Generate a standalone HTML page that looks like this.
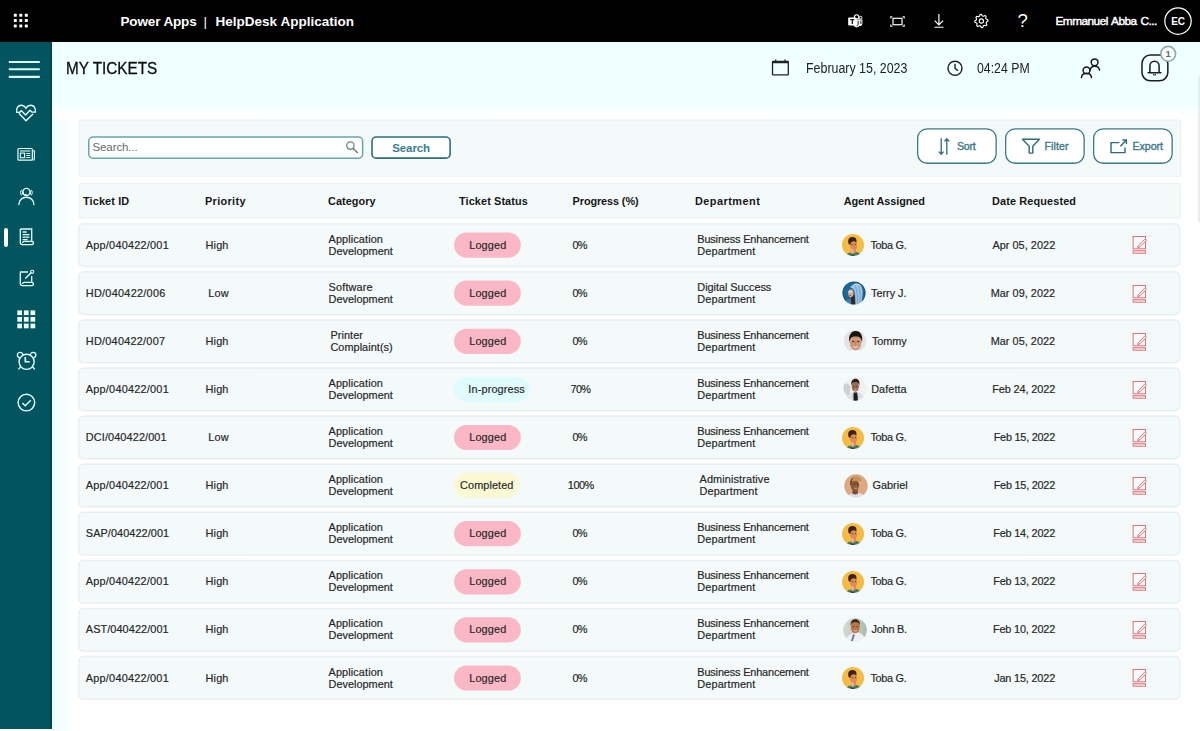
<!DOCTYPE html>
<html lang="en"><head><meta charset="utf-8"><title>HelpDesk Application - My Tickets</title>
<style>
*{box-sizing:border-box;margin:0;padding:0}
html,body{width:1200px;height:731px;overflow:hidden;background:#fff}
body{position:relative;font-family:"Liberation Sans",sans-serif;color:#222}
.t{position:absolute;white-space:nowrap}
.abs{position:absolute}
svg{position:absolute;overflow:visible}
.topbar{position:absolute;left:0;top:0;width:1200px;height:42px;background:#000}
.side{position:absolute;left:0;top:42px;width:52px;height:686.5px;background:#02545e}
.side:after{content:"";position:absolute;right:0;top:0;width:3px;height:100%;background:linear-gradient(90deg,rgba(0,30,40,0),rgba(0,30,40,.12) 45%,rgba(0,30,40,.45))}
.head{position:absolute;left:52px;top:42px;width:1148px;height:78px;background:linear-gradient(180deg,#f0ffff 0,#f0ffff 61px,#f8ffff 67px,#fff 73px)}
</style></head><body>

<div class="topbar"></div>
<svg style="left:0;top:0" width="42" height="42" viewBox="0 0 42 42"><rect x="13.8" y="13.8" width="3" height="3" rx=".6" fill="#fff"/><rect x="19.3" y="13.8" width="3" height="3" rx=".6" fill="#fff"/><rect x="24.8" y="13.8" width="3" height="3" rx=".6" fill="#fff"/><rect x="13.8" y="19.1" width="3" height="3" rx=".6" fill="#fff"/><rect x="19.3" y="19.1" width="3" height="3" rx=".6" fill="#fff"/><rect x="24.8" y="19.1" width="3" height="3" rx=".6" fill="#fff"/><rect x="13.8" y="24.4" width="3" height="3" rx=".6" fill="#fff"/><rect x="19.3" y="24.4" width="3" height="3" rx=".6" fill="#fff"/><rect x="24.8" y="24.4" width="3" height="3" rx=".6" fill="#fff"/></svg>
<div class="t" style="left:120.50px;top:12.62px;font-size:13.5px;line-height:18px;font-weight:700;color:#fff;letter-spacing:-0.146px;">Power Apps</div>
<div class="t" style="left:203.50px;top:12.62px;font-size:13.5px;line-height:18px;font-weight:400;color:#fff;letter-spacing:0.000px;">|</div>
<div class="t" style="left:215.50px;top:12.62px;font-size:13.5px;line-height:18px;font-weight:700;color:#fff;letter-spacing:0.012px;">HelpDesk Application</div>
<svg style="left:847.6px;top:13.6px" width="15" height="15" viewBox="0 0 15 15">
<circle cx="8.6" cy="2.9" r="2.2" fill="none" stroke="#fff" stroke-width="1.1"/>
<circle cx="12.7" cy="3.7" r="1.35" fill="none" stroke="#fff" stroke-width="1"/>
<path d="M6.2 5.4h5.6v5.0a3.3 3.3 0 0 1-6.2 1.2z" fill="#fff"/>
<path d="M11.2 5.6h3.2v4.2a2.2 2.2 0 0 1-3.2 1.9z" fill="#fff"/>
<path d="M10.1 6.6v3.6a1.8 1.8 0 0 1-1.4 1.7" fill="none" stroke="#000" stroke-width=".9"/>
<path d="M12.9 6.6v3.4" fill="none" stroke="#000" stroke-width=".9"/>
<rect x="0.2" y="3.4" width="8.2" height="8.2" rx=".8" fill="#fff"/>
<path d="M2.3 5.7h4M4.3 5.7v4.2" stroke="#111" stroke-width="1.25" fill="none"/>
</svg>
<svg style="left:889.6px;top:15.6px" width="15" height="11" viewBox="0 0 15 11">
<rect x="3" y="2.3" width="9" height="6.4" fill="none" stroke="#f2f2f2" stroke-width="1.25"/>
<path d="M.8 2.400V.8h1.600M12.600 .8h1.600v1.600M14.200 8.600v1.600h-1.600M2.400 10.200H.8V8.600" fill="none" stroke="#fff" stroke-width="1.1"/>
</svg>
<svg style="left:933px;top:13px" width="12" height="16" viewBox="0 0 12 16">
<path d="M5.9 1.100v10.800M1.700 7.600L5.900 11.900l4.200-4.300M1.500 14.250h9" fill="none" stroke="#fff" stroke-width="1.2"/>
</svg>
<svg style="left:973px;top:13px" width="16" height="16" viewBox="0 0 16 16">
<path d="M14.92 6.70 L15.05 8.00 L13.45 9.00 L13.16 9.97 L13.93 11.69 L13.10 12.70 L11.26 12.28 L10.37 12.76 L9.70 14.52 L8.40 14.65 L7.40 13.05 L6.43 12.76 L4.71 13.53 L3.70 12.70 L4.12 10.86 L3.64 9.97 L1.88 9.30 L1.75 8.00 L3.35 7.00 L3.64 6.03 L2.87 4.31 L3.70 3.30 L5.54 3.72 L6.43 3.24 L7.10 1.48 L8.40 1.35 L9.40 2.95 L10.37 3.24 L12.09 2.47 L13.10 3.30 L12.68 5.14 L13.16 6.03Z" fill="none" stroke="#fff" stroke-width="1.1" stroke-linejoin="round"/>
<circle cx="8.4" cy="8" r="2.1" fill="none" stroke="#fff" stroke-width="1.1"/>
</svg>
<div class="t" style="left:1022.70px;top:9.19px;font-size:18.5px;line-height:24px;font-weight:400;color:#fff;letter-spacing:0.000px;transform:translateX(-50%);transform-origin:center center;">?</div>
<div class="t" style="left:1055.50px;top:14.21px;font-size:11.8px;line-height:15px;font-weight:400;color:#fff;letter-spacing:-0.506px;-webkit-text-stroke:.45px #fff;word-spacing:1.1px;">Emmanuel Abba C...</div>
<svg style="left:0;top:0" width="1" height="1"><rect x="1164.83" y="7.92" width="26.35" height="26.35" rx="13.8" fill="none" stroke="#fff" stroke-width="1.25"/></svg>
<div class="t" style="left:1178.00px;top:15.23px;font-size:10px;line-height:13px;font-weight:700;color:#fff;letter-spacing:-0.200px;transform:translateX(-50%);transform-origin:center center;margin-left:-0.100px;">EC</div>
<div class="side"></div>
<svg style="left:0;top:42px" width="52" height="50" viewBox="0 0 52 50">
<path d="M8.8 20H39.8M8.8 27.3H39.8M8.8 34.9H39.8" stroke="#dcfcfc" stroke-width="2.1" fill="none"/></svg>
<svg style="left:14px;top:101px" width="24" height="23" viewBox="0 0 24 23">
<path d="M2.800 11C1.900 7 4.500 3.900 7.600 4.200C9.600 4.400 11.200 5.600 12 7.100C12.800 5.600 14.400 4.400 16.400 4.200C19.500 3.900 22.100 7 21.200 11" fill="none" stroke="#e3fdff" stroke-width="1.450" stroke-linecap="round"/>
<path d="M2.800 11.400H5.400L7.400 9.700L11.600 13.900L16 9.300L17.800 11.100H21.200" fill="none" stroke="#e3fdff" stroke-width="1.400" stroke-linejoin="round" stroke-linecap="round"/>
<path d="M5.300 12.700L12 19.700L18.700 13.200" fill="none" stroke="#e3fdff" stroke-width="1.450" stroke-linejoin="round" stroke-linecap="round"/>
</svg>
<svg style="left:16.700px;top:146.800px" width="18.500" height="14.800" viewBox="0 0 20 16">
<rect x="1" y="1.6" width="15.6" height="12.6" rx="1" fill="none" stroke="#e3fdff" stroke-width="1.3"/>
<path d="M16.6 4h2.2v8.6a1.6 1.6 0 0 1-1.6 1.6" fill="none" stroke="#e3fdff" stroke-width="1.2"/>
<path d="M3.2 4.3h11.2" stroke="#e3fdff" stroke-width="1.2"/>
<rect x="3.6" y="6.6" width="4.6" height="5" fill="none" stroke="#e3fdff" stroke-width="1.2"/>
<path d="M10 7h4.4M10 9.2h4.4M10 11.4h4.4" stroke="#e3fdff" stroke-width="1.1"/>
</svg>
<svg style="left:17px;top:186px" width="19" height="20" viewBox="0 0 19 20">
<circle cx="9.4" cy="5.9" r="3.600" fill="none" stroke="#e3fdff" stroke-width="1.300"/>
<ellipse cx="4.500" cy="6.600" rx=".95" ry="2.300" fill="none" stroke="#e3fdff" stroke-width="1"/>
<ellipse cx="14.300" cy="6.600" rx=".95" ry="2.300" fill="none" stroke="#e3fdff" stroke-width="1"/>
<path d="M6.300 5.600v1.800a1.600 1.600 0 0 0 1.600 1.300h.9" fill="none" stroke="#e3fdff" stroke-width="1"/>
<circle cx="8.900" cy="8.600" r=".9" fill="#e3fdff"/>
<path d="M1.900 18.500a7.500 7.300 0 0 1 15 0" fill="none" stroke="#e3fdff" stroke-width="1.400" stroke-linecap="round"/>
</svg>
<div class="abs" style="left:3.5px;top:227.5px;width:4.3px;height:19.2px;border-radius:2.2px;background:#fff"></div>
<svg style="left:19px;top:228px" width="15" height="18" viewBox="0 0 15 18">
<path d="M1.3 1h11.4v13.2" fill="none" stroke="#e3fdff" stroke-width="1.3"/>
<path d="M1.3 1v13.6a2 2 0 0 0 2 2h9.6a1.6 1.6 0 0 0 0-3.2H5.2a1.6 1.6 0 0 0-1.6 1.6" fill="none" stroke="#e3fdff" stroke-width="1.3" stroke-linejoin="round"/>
<path d="M3.6 4h4M3.6 6.6h6.8M3.6 9.2h6.8M3.6 11.6h5" stroke="#e3fdff" stroke-width="1.3"/>
</svg>
<svg style="left:19px;top:269px" width="16" height="18" viewBox="0 0 16 18">
<path d="M9 3H1.3v11.6a2 2 0 0 0 2 2h9.6a1.6 1.6 0 0 0 0-3.2H5.2a1.6 1.6 0 0 0-1.6 1.6" fill="none" stroke="#e3fdff" stroke-width="1.3" stroke-linejoin="round"/>
<path d="M12.7 7v6.4" stroke="#e3fdff" stroke-width="1.3"/>
<path d="M6.4 9.6l6-6" stroke="#e3fdff" stroke-width="1.4"/>
<circle cx="13.2" cy="2.8" r="1.6" fill="none" stroke="#e3fdff" stroke-width="1.1"/>
</svg>
<svg style="left:17px;top:310px" width="19" height="19" viewBox="0 0 19 19"><rect x="0.3" y="0.4" width="4.7" height="4.7" fill="#f2ffff"/><rect x="6.9" y="0.4" width="4.7" height="4.7" fill="#f2ffff"/><rect x="13.5" y="0.4" width="4.7" height="4.7" fill="#f2ffff"/><rect x="0.3" y="7.0" width="4.7" height="4.7" fill="#f2ffff"/><rect x="6.9" y="7.0" width="4.7" height="4.7" fill="#f2ffff"/><rect x="13.5" y="7.0" width="4.7" height="4.7" fill="#f2ffff"/><rect x="0.3" y="13.6" width="4.7" height="4.7" fill="#f2ffff"/><rect x="6.9" y="13.6" width="4.7" height="4.7" fill="#f2ffff"/><rect x="13.5" y="13.6" width="4.7" height="4.7" fill="#f2ffff"/></svg>
<svg style="left:16px;top:351px" width="21" height="20" viewBox="0 0 21 20">
<circle cx="4.100" cy="4.100" r="2.800" fill="none" stroke="#e3fdff" stroke-width="1.300"/>
<circle cx="17.100" cy="4.100" r="2.800" fill="none" stroke="#e3fdff" stroke-width="1.300"/>
<circle cx="10.600" cy="10.800" r="7.550" fill="#02545e" stroke="#e3fdff" stroke-width="1.400"/>
<path d="M9.300 6v4.800h4.400" fill="none" stroke="#e3fdff" stroke-width="1.600"/>
<path d="M4.300 16.200L2.800 17.900M16.900 16.200l1.500 1.700" stroke="#e3fdff" stroke-width="1.400" stroke-linecap="round"/>
</svg>
<svg style="left:17px;top:392.5px" width="19" height="19" viewBox="0 0 19 19">
<circle cx="9.4" cy="9.6" r="8.3" fill="none" stroke="#e3fdff" stroke-width="1.4"/>
<path d="M5.4 10l2.8 2.8 5.6-5.6" fill="none" stroke="#e3fdff" stroke-width="1.4"/>
</svg>
<div class="abs" style="left:52px;top:100px;width:22px;height:631px;background:linear-gradient(90deg,#eefdfd,#f6fefe 50%,#fff)"></div>
<div class="head"></div>
<div class="t" style="left:65.90px;top:57.04px;font-size:17.2px;line-height:22px;font-weight:400;color:#0c0c0c;letter-spacing:0.000px;transform:scaleX(0.8895);transform-origin:left center;-webkit-text-stroke:.3px #0c0c0c;">MY TICKETS</div>
<svg style="left:770px;top:58px" width="21" height="19" viewBox="0 0 21 19">
<rect x="2.5" y="3.4" width="15.800" height="13.500" rx=".6" fill="none" stroke="#222" stroke-width="1.3"/>
<path d="M2.500 4.600h15.800" stroke="#222" stroke-width="1.300" fill="none"/>
<path d="M5.700 1.400v2.600M15 1.400v2.600" stroke="#222" stroke-width="1.300" fill="none"/></svg>
<div class="t" style="left:805.60px;top:59.25px;font-size:14px;line-height:18px;font-weight:400;color:#222;letter-spacing:0.000px;transform:scaleX(0.8862);transform-origin:left center;">February 15, 2023</div>
<svg style="left:946px;top:59px" width="18" height="18" viewBox="0 0 18 18">
<circle cx="9" cy="9.2" r="7" fill="none" stroke="#222" stroke-width="1.4"/>
<path d="M9 4.8v4.6l3 2.4" fill="none" stroke="#222" stroke-width="1.4"/></svg>
<div class="t" style="left:977.30px;top:59.25px;font-size:14px;line-height:18px;font-weight:400;color:#222;letter-spacing:0.000px;transform:scaleX(0.8789);transform-origin:left center;">04:24 PM</div>
<svg style="left:1080px;top:57px" width="22" height="23" viewBox="0 0 22 23">
<circle cx="14.6" cy="5.3" r="3.4" fill="none" stroke="#1a1a1a" stroke-width="1.5"/>
<path d="M10 13.4a4.9 4.9 0 0 1 9.6-.4" fill="none" stroke="#1a1a1a" stroke-width="1.5" stroke-linecap="round"/>
<circle cx="6.5" cy="13.4" r="3.4" fill="none" stroke="#1a1a1a" stroke-width="1.5"/>
<path d="M1.4 20.6a5.1 5.1 0 0 1 10.1 0" fill="none" stroke="#1a1a1a" stroke-width="1.5" stroke-linecap="round"/></svg>
<svg style="left:0;top:0" width="1" height="1"><rect x="1141.98" y="54.98" width="25.85" height="25.85" rx="8.4" fill="none" stroke="#1f1f1f" stroke-width="1.55"/></svg>
<svg style="left:1147.200px;top:59.200px" width="16" height="18" viewBox="0 0 16 18">
<path d="M1.100 13.700h12.800M2.900 13.500V6.900a4.600 4.600 0 0 1 9.200 0v6.600" fill="none" stroke="#1a1a1a" stroke-width="1.500" stroke-linecap="round"/>
<path d="M6.100 15.100a1.500 1.500 0 0 0 2.800 0" fill="none" stroke="#1a1a1a" stroke-width="1.100"/></svg>
<svg style="left:0;top:0" width="1" height="1"><rect x="1160.80" y="46.40" width="14.80" height="14.80" rx="8.2" fill="#fbffff" stroke="#8cabab" stroke-width="1.6"/></svg>
<div class="t" style="left:1168.20px;top:47.91px;font-size:9.5px;line-height:12px;font-weight:700;color:#6a6a6a;letter-spacing:0.000px;transform:translateX(-50%);transform-origin:center center;">1</div>
<svg style="left:0;top:0" width="1200" height="731" viewBox="0 0 1200 731"><rect x="79.10" y="120.30" width="1101.40" height="55.80" rx="1.5" fill="none" stroke="#f6fbfb" stroke-width="2.4"/><rect x="79.10" y="120.30" width="1101.40" height="55.80" rx="1.5" fill="#f4fafa" stroke="#eaf3f3" stroke-width="1"/><rect x="79.10" y="183.70" width="1101.20" height="34.10" rx="2" fill="none" stroke="#f6fbfb" stroke-width="2.4"/><rect x="79.10" y="183.70" width="1101.20" height="34.10" rx="2" fill="#f4fafa" stroke="#eaf3f3" stroke-width="1"/><rect x="78.90" y="223.90" width="1100.60" height="42.30" rx="4.5" fill="none" stroke="#f1f8f8" stroke-width="2.4"/><rect x="78.90" y="223.90" width="1100.60" height="42.30" rx="4.5" fill="#f4fafa" stroke="#e3eeee" stroke-width="1"/><rect x="78.90" y="272.00" width="1100.60" height="42.30" rx="4.5" fill="none" stroke="#f1f8f8" stroke-width="2.4"/><rect x="78.90" y="272.00" width="1100.60" height="42.30" rx="4.5" fill="#f4fafa" stroke="#e3eeee" stroke-width="1"/><rect x="78.90" y="320.10" width="1100.60" height="42.30" rx="4.5" fill="none" stroke="#f1f8f8" stroke-width="2.4"/><rect x="78.90" y="320.10" width="1100.60" height="42.30" rx="4.5" fill="#f4fafa" stroke="#e3eeee" stroke-width="1"/><rect x="78.90" y="368.20" width="1100.60" height="42.30" rx="4.5" fill="none" stroke="#f1f8f8" stroke-width="2.4"/><rect x="78.90" y="368.20" width="1100.60" height="42.30" rx="4.5" fill="#f4fafa" stroke="#e3eeee" stroke-width="1"/><rect x="78.90" y="416.30" width="1100.60" height="42.30" rx="4.5" fill="none" stroke="#f1f8f8" stroke-width="2.4"/><rect x="78.90" y="416.30" width="1100.60" height="42.30" rx="4.5" fill="#f4fafa" stroke="#e3eeee" stroke-width="1"/><rect x="78.90" y="464.40" width="1100.60" height="42.30" rx="4.5" fill="none" stroke="#f1f8f8" stroke-width="2.4"/><rect x="78.90" y="464.40" width="1100.60" height="42.30" rx="4.5" fill="#f4fafa" stroke="#e3eeee" stroke-width="1"/><rect x="78.90" y="512.50" width="1100.60" height="42.30" rx="4.5" fill="none" stroke="#f1f8f8" stroke-width="2.4"/><rect x="78.90" y="512.50" width="1100.60" height="42.30" rx="4.5" fill="#f4fafa" stroke="#e3eeee" stroke-width="1"/><rect x="78.90" y="560.60" width="1100.60" height="42.30" rx="4.5" fill="none" stroke="#f1f8f8" stroke-width="2.4"/><rect x="78.90" y="560.60" width="1100.60" height="42.30" rx="4.5" fill="#f4fafa" stroke="#e3eeee" stroke-width="1"/><rect x="78.90" y="608.70" width="1100.60" height="42.30" rx="4.5" fill="none" stroke="#f1f8f8" stroke-width="2.4"/><rect x="78.90" y="608.70" width="1100.60" height="42.30" rx="4.5" fill="#f4fafa" stroke="#e3eeee" stroke-width="1"/><rect x="78.90" y="656.80" width="1100.60" height="42.30" rx="4.5" fill="none" stroke="#f1f8f8" stroke-width="2.4"/><rect x="78.90" y="656.80" width="1100.60" height="42.30" rx="4.5" fill="#f4fafa" stroke="#e3eeee" stroke-width="1"/></svg>
<svg style="left:0;top:0" width="1" height="1"><rect x="88.75" y="136.95" width="273.90" height="21.20" rx="4.2" fill="#fff" stroke="#69a5a8" stroke-width="1.5"/></svg>
<div class="t" style="left:92.50px;top:140.12px;font-size:11.5px;line-height:15px;font-weight:400;color:#6a6a6a;letter-spacing:-0.100px;">Search...</div>
<svg style="left:345px;top:140px" width="14" height="14" viewBox="0 0 14 14">
<circle cx="5.4" cy="5.6" r="3.7" fill="none" stroke="#6f8282" stroke-width="1.3"/>
<path d="M8.2 8.4l4.6 4.6" stroke="#6f8282" stroke-width="1.5"/></svg>
<svg style="left:0;top:0" width="1" height="1"><rect x="372.00" y="137.00" width="78.10" height="21.10" rx="4.2" fill="#fff" stroke="#2d6d7a" stroke-width="1.6"/></svg>
<div class="t" style="left:411.20px;top:140.72px;font-size:11.5px;line-height:15px;font-weight:700;color:#3b7d8d;letter-spacing:-0.100px;transform:translateX(-50%);transform-origin:center center;margin-left:-0.050px;">Search</div>
<svg style="left:0;top:0" width="1" height="1"><rect x="917.65" y="128.85" width="78.50" height="34.40" rx="9.5" fill="#fff" stroke="#3b7b86" stroke-width="1.3"/></svg>
<svg style="left:0;top:0" width="1" height="1"><rect x="1005.65" y="128.85" width="78.50" height="34.40" rx="9.5" fill="#fff" stroke="#3b7b86" stroke-width="1.3"/></svg>
<svg style="left:0;top:0" width="1" height="1"><rect x="1093.65" y="128.85" width="78.50" height="34.40" rx="9.5" fill="#fff" stroke="#3b7b86" stroke-width="1.3"/></svg>
<svg style="left:937px;top:137px" width="14" height="19" viewBox="0 0 14 19">
<path d="M4.200 1.200v16M1.800 14.600l2.400 2.700 2.400-2.700M9.800 17.800V1.800M7.400 4.400l2.400-2.700 2.400 2.700" fill="none" stroke="#2f6b76" stroke-width="1.3"/></svg>
<div class="t" style="left:957.00px;top:139.13px;font-size:10.6px;line-height:14px;font-weight:400;color:#3f7c88;letter-spacing:-0.212px;-webkit-text-stroke:.4px #3f7c88;">Sort</div>
<svg style="left:1021px;top:138px" width="20" height="17" viewBox="0 0 20 17">
<path d="M1.4 1.3h17l-6.6 7v6.8h-3.6V8.3z" fill="none" stroke="#2f6b76" stroke-width="1.4" stroke-linejoin="round"/></svg>
<div class="t" style="left:1044.50px;top:139.13px;font-size:10.6px;line-height:14px;font-weight:400;color:#3f7c88;letter-spacing:0.091px;-webkit-text-stroke:.4px #3f7c88;">Filter</div>
<svg style="left:1109px;top:138px" width="20" height="17" viewBox="0 0 20 17">
<path d="M10.400 4.600H2v10h14V9.600" fill="none" stroke="#2f6b76" stroke-width="1.4"/>
<path d="M11.400 8.200l5.600-5.800M13.400 2h4V6" fill="none" stroke="#2f6b76" stroke-width="1.4"/></svg>
<div class="t" style="left:1132.50px;top:139.13px;font-size:10.6px;line-height:14px;font-weight:400;color:#3f7c88;letter-spacing:-0.025px;-webkit-text-stroke:.4px #3f7c88;">Export</div>
<div class="t" style="left:83.00px;top:193.52px;font-size:10.9px;line-height:14px;font-weight:700;color:#161616;letter-spacing:0.125px;">Ticket ID</div>
<div class="t" style="left:205.00px;top:193.52px;font-size:10.9px;line-height:14px;font-weight:700;color:#161616;letter-spacing:0.337px;">Priority</div>
<div class="t" style="left:328.00px;top:193.52px;font-size:10.9px;line-height:14px;font-weight:700;color:#161616;letter-spacing:0.040px;">Category</div>
<div class="t" style="left:459.00px;top:193.52px;font-size:10.9px;line-height:14px;font-weight:700;color:#161616;letter-spacing:0.101px;">Ticket Status</div>
<div class="t" style="left:572.60px;top:193.52px;font-size:10.9px;line-height:14px;font-weight:700;color:#161616;letter-spacing:-0.108px;">Progress (%)</div>
<div class="t" style="left:695.00px;top:193.52px;font-size:10.9px;line-height:14px;font-weight:700;color:#161616;letter-spacing:0.476px;">Department</div>
<div class="t" style="left:843.80px;top:193.52px;font-size:10.9px;line-height:14px;font-weight:700;color:#161616;letter-spacing:-0.115px;">Agent Assigned</div>
<div class="t" style="left:992.00px;top:193.52px;font-size:10.9px;line-height:14px;font-weight:700;color:#161616;letter-spacing:0.130px;">Date Requested</div>
<div class="t" style="left:85.80px;top:237.67px;font-size:10.9px;line-height:14px;font-weight:400;color:#262626;letter-spacing:0.227px;-webkit-text-stroke:.18px #262626;">App/040422/001</div>
<div class="t" style="left:205.60px;top:237.67px;font-size:10.9px;line-height:14px;font-weight:400;color:#262626;letter-spacing:0.131px;-webkit-text-stroke:.18px #262626;">High</div>
<div class="t" style="left:328.60px;top:231.67px;font-size:10.9px;line-height:14px;font-weight:400;color:#262626;letter-spacing:0.102px;-webkit-text-stroke:.18px #262626;">Application</div>
<div class="t" style="left:328.60px;top:243.67px;font-size:10.9px;line-height:14px;font-weight:400;color:#262626;letter-spacing:0.003px;-webkit-text-stroke:.18px #262626;">Development</div>
<svg style="left:0;top:0" width="1" height="1"><rect x="454" y="232.50" width="66.8" height="25.2" rx="12.65" fill="#fab7c5"/></svg>
<div class="t" style="left:469.20px;top:237.67px;font-size:10.9px;line-height:14px;font-weight:400;color:#2a2a2a;letter-spacing:0.131px;-webkit-text-stroke:.18px #262626;">Logged</div>
<div class="t" style="left:572.60px;top:237.67px;font-size:10.9px;line-height:14px;font-weight:400;color:#262626;letter-spacing:-0.950px;-webkit-text-stroke:.18px #262626;">0%</div>
<div class="t" style="left:697.30px;top:231.67px;font-size:10.9px;line-height:14px;font-weight:400;color:#262626;letter-spacing:-0.149px;-webkit-text-stroke:.18px #262626;">Business Enhancement</div>
<div class="t" style="left:697.30px;top:243.67px;font-size:10.9px;line-height:14px;font-weight:400;color:#262626;letter-spacing:0.122px;-webkit-text-stroke:.18px #262626;">Department</div>
<svg style="left:841.0px;top:233.1px" width="24" height="24" viewBox="0 0 24 24"><defs><clipPath id="c8530_2451"><circle cx="12" cy="12" r="11.0"/></clipPath><filter id="fc8530_2451" x="-10%" y="-10%" width="120%" height="120%"><feGaussianBlur stdDeviation=".45"/></filter></defs><g clip-path="url(#c8530_2451)"><g filter="url(#fc8530_2451)"><rect x="-2" y="-2" width="28" height="28" fill="#f5bc44"/><path d="M4.200 25C4.800 20.600 8 19.300 10.200 19.400L15.200 19C18.200 19.300 20.200 21.200 20.500 25Z" fill="#3f7f60"/><path d="M10.200 15.500h4.200l.4 4.300c-1.400 1.200-3.600 1.200-5 0z" fill="#c97d52"/><ellipse cx="12.700" cy="12.500" rx="3.500" ry="4.700" fill="#d88c5b"/><path d="M7.600 11C6.600 7.500 7.400 5 10 4.300C12.500 3.600 15.300 4.600 15.500 7.200C15.600 8.400 15.400 9.200 15.200 9.800C14.600 8.600 13.600 8 12.400 8.200C10.600 8.500 9.500 9.500 9.300 12Z" fill="#3a2015"/><path d="M10.700 11.600h1.300M13.700 11.600h1.300" stroke="#6b3a22" stroke-width=".8"/><ellipse cx="11.500" cy="18.300" rx="1.900" ry="2.400" fill="#e6b08d"/><path d="M9.800 21.500c.8 1.300 2.600 1.500 3.600.4" stroke="#1f3d30" stroke-width="1.200" fill="none"/></g></g></svg>
<div class="t" style="left:870.50px;top:237.67px;font-size:10.9px;line-height:14px;font-weight:400;color:#262626;letter-spacing:-0.323px;-webkit-text-stroke:.18px #262626;">Toba G.</div>
<div class="t" style="left:992.40px;top:237.67px;font-size:10.9px;line-height:14px;font-weight:400;color:#262626;letter-spacing:0.039px;-webkit-text-stroke:.18px #262626;">Apr 05, 2022</div>
<svg style="left:1131px;top:235.4px" width="18" height="20" viewBox="0 0 18 20">
<rect x="2.1" y="1.5" width="12.400" height="12.300" fill="none" stroke="#d96a73" stroke-width=".95"/>
<path d="M6.600 12.700l.9-2.400 6-6a1.050 1.050 0 0 1 1.500 1.500l-6 6z" fill="#f8eef0" stroke="#d96a73" stroke-width=".9" stroke-linejoin="round"/>
<rect x="2.100" y="15.700" width="12.400" height="2.500" fill="#fbdde0" stroke="#d96a73" stroke-width=".9"/>
</svg>
<div class="t" style="left:85.80px;top:285.77px;font-size:10.9px;line-height:14px;font-weight:400;color:#262626;letter-spacing:0.267px;-webkit-text-stroke:.18px #262626;">HD/040422/006</div>
<div class="t" style="left:208.30px;top:285.77px;font-size:10.9px;line-height:14px;font-weight:400;color:#262626;letter-spacing:0.108px;-webkit-text-stroke:.18px #262626;">Low</div>
<div class="t" style="left:328.60px;top:279.77px;font-size:10.9px;line-height:14px;font-weight:400;color:#262626;letter-spacing:0.145px;-webkit-text-stroke:.18px #262626;">Software</div>
<div class="t" style="left:328.60px;top:291.77px;font-size:10.9px;line-height:14px;font-weight:400;color:#262626;letter-spacing:0.003px;-webkit-text-stroke:.18px #262626;">Development</div>
<svg style="left:0;top:0" width="1" height="1"><rect x="454" y="280.60" width="66.8" height="25.2" rx="12.65" fill="#fab7c5"/></svg>
<div class="t" style="left:469.20px;top:285.77px;font-size:10.9px;line-height:14px;font-weight:400;color:#2a2a2a;letter-spacing:0.131px;-webkit-text-stroke:.18px #262626;">Logged</div>
<div class="t" style="left:572.60px;top:285.77px;font-size:10.9px;line-height:14px;font-weight:400;color:#262626;letter-spacing:-0.950px;-webkit-text-stroke:.18px #262626;">0%</div>
<div class="t" style="left:697.30px;top:279.77px;font-size:10.9px;line-height:14px;font-weight:400;color:#262626;letter-spacing:-0.032px;-webkit-text-stroke:.18px #262626;">Digital Success</div>
<div class="t" style="left:697.30px;top:291.77px;font-size:10.9px;line-height:14px;font-weight:400;color:#262626;letter-spacing:0.122px;-webkit-text-stroke:.18px #262626;">Department</div>
<svg style="left:841.7px;top:281.2px" width="24" height="24" viewBox="0 0 24 24"><defs><clipPath id="c8537_2932"><circle cx="12" cy="12" r="11.6"/></clipPath><filter id="fc8537_2932" x="-10%" y="-10%" width="120%" height="120%"><feGaussianBlur stdDeviation=".45"/></filter></defs><g clip-path="url(#c8537_2932)"><g filter="url(#fc8537_2932)"><rect x="-2" y="-2" width="28" height="28" fill="#1f6893"/><circle cx="12" cy="12" r="11.300" fill="none" stroke="#15557c" stroke-width="1.600"/><path d="M1.500 25C2 19.500 5.500 17.800 9.500 18.200L10.500 25Z" fill="#3a83b2"/><path d="M8.200 7.200C9.500 2 17 .8 19.600 6C21.600 10 20.400 17 19 25L12.800 25C13.800 19 13.400 12.500 11.600 8.600C10.600 7.200 9.300 6.800 8.200 7.200Z" fill="#9dc5e1"/><path d="M13 4.500C15 9 16 15 15.200 24M16.500 5C18.500 10 18.500 16 17.500 23" stroke="#6c9fc9" stroke-width=".9" fill="none"/><path d="M12 3.500C14 2.500 17 3 18.500 5" stroke="#c9e2f3" stroke-width="1" fill="none"/><path d="M8.800 15.600L12.400 13.800L13.600 25L9.400 25Z" fill="#35282b"/><ellipse cx="8.800" cy="12.300" rx="2.600" ry="4.100" fill="#dba78f"/><path d="M6.300 10.800h4" stroke="#f1f3f5" stroke-width="1"/><path d="M7 14.200c.6.500 1.400.5 2 0" stroke="#8a4a42" stroke-width=".8" fill="none"/></g></g></svg>
<div class="t" style="left:871.00px;top:285.77px;font-size:10.9px;line-height:14px;font-weight:400;color:#262626;letter-spacing:-0.029px;-webkit-text-stroke:.18px #262626;">Terry J.</div>
<div class="t" style="left:990.70px;top:285.77px;font-size:10.9px;line-height:14px;font-weight:400;color:#262626;letter-spacing:0.028px;-webkit-text-stroke:.18px #262626;">Mar 09, 2022</div>
<svg style="left:1131px;top:283.5px" width="18" height="20" viewBox="0 0 18 20">
<rect x="2.1" y="1.5" width="12.400" height="12.300" fill="none" stroke="#d96a73" stroke-width=".95"/>
<path d="M6.600 12.700l.9-2.400 6-6a1.050 1.050 0 0 1 1.500 1.500l-6 6z" fill="#f8eef0" stroke="#d96a73" stroke-width=".9" stroke-linejoin="round"/>
<rect x="2.100" y="15.700" width="12.400" height="2.500" fill="#fbdde0" stroke="#d96a73" stroke-width=".9"/>
</svg>
<div class="t" style="left:85.80px;top:333.87px;font-size:10.9px;line-height:14px;font-weight:400;color:#262626;letter-spacing:0.242px;-webkit-text-stroke:.18px #262626;">HD/040422/007</div>
<div class="t" style="left:205.60px;top:333.87px;font-size:10.9px;line-height:14px;font-weight:400;color:#262626;letter-spacing:0.131px;-webkit-text-stroke:.18px #262626;">High</div>
<div class="t" style="left:330.40px;top:327.87px;font-size:10.9px;line-height:14px;font-weight:400;color:#262626;letter-spacing:0.070px;-webkit-text-stroke:.18px #262626;">Printer</div>
<div class="t" style="left:330.40px;top:339.87px;font-size:10.9px;line-height:14px;font-weight:400;color:#262626;letter-spacing:0.051px;-webkit-text-stroke:.18px #262626;">Complaint(s)</div>
<svg style="left:0;top:0" width="1" height="1"><rect x="454" y="328.70" width="66.8" height="25.2" rx="12.65" fill="#fab7c5"/></svg>
<div class="t" style="left:469.20px;top:333.87px;font-size:10.9px;line-height:14px;font-weight:400;color:#2a2a2a;letter-spacing:0.131px;-webkit-text-stroke:.18px #262626;">Logged</div>
<div class="t" style="left:572.60px;top:333.87px;font-size:10.9px;line-height:14px;font-weight:400;color:#262626;letter-spacing:-0.950px;-webkit-text-stroke:.18px #262626;">0%</div>
<div class="t" style="left:697.30px;top:327.87px;font-size:10.9px;line-height:14px;font-weight:400;color:#262626;letter-spacing:-0.149px;-webkit-text-stroke:.18px #262626;">Business Enhancement</div>
<div class="t" style="left:697.30px;top:339.87px;font-size:10.9px;line-height:14px;font-weight:400;color:#262626;letter-spacing:0.122px;-webkit-text-stroke:.18px #262626;">Department</div>
<svg style="left:843.2px;top:329.3px" width="24" height="24" viewBox="0 0 24 24"><defs><clipPath id="c8552_3413"><circle cx="12" cy="12" r="11.8"/></clipPath><filter id="fc8552_3413" x="-10%" y="-10%" width="120%" height="120%"><feGaussianBlur stdDeviation=".45"/></filter></defs><g clip-path="url(#c8552_3413)"><g filter="url(#fc8552_3413)"><rect x="-2" y="-2" width="28" height="28" fill="#e3e3e7"/><circle cx="12" cy="12" r="11.600" fill="none" stroke="#f1f1f3" stroke-width="1.600"/><path d="M4 25C5 21.800 8.500 21 12.600 21.600C16.500 21 20 21.800 21 25Z" fill="#fbfbfb"/><ellipse cx="12.600" cy="14" rx="5.800" ry="7.300" fill="#cf9676"/><path d="M6.300 13.500C5.200 6.500 8 2 12.600 2C17.600 2 20.200 6.500 19 13.500C18.400 9.600 16.800 7.600 12.600 7.600C8.400 7.600 7 9.600 6.300 13.500Z" fill="#17120f"/><path d="M9 12.600h2.400M14 12.600h2.400" stroke="#4a2c20" stroke-width="1"/><path d="M10.400 17.600c1.200 1.200 3.200 1.200 4.400 0" stroke="#f3dcd0" stroke-width="1.100" fill="none"/><path d="M12.600 13v3" stroke="#b57a5c" stroke-width=".9"/></g></g></svg>
<div class="t" style="left:872.00px;top:333.87px;font-size:10.9px;line-height:14px;font-weight:400;color:#262626;letter-spacing:-0.073px;-webkit-text-stroke:.18px #262626;">Tommy</div>
<div class="t" style="left:990.70px;top:333.87px;font-size:10.9px;line-height:14px;font-weight:400;color:#262626;letter-spacing:0.028px;-webkit-text-stroke:.18px #262626;">Mar 05, 2022</div>
<svg style="left:1131px;top:331.6px" width="18" height="20" viewBox="0 0 18 20">
<rect x="2.1" y="1.5" width="12.400" height="12.300" fill="none" stroke="#d96a73" stroke-width=".95"/>
<path d="M6.600 12.700l.9-2.400 6-6a1.050 1.050 0 0 1 1.500 1.500l-6 6z" fill="#f8eef0" stroke="#d96a73" stroke-width=".9" stroke-linejoin="round"/>
<rect x="2.100" y="15.700" width="12.400" height="2.500" fill="#fbdde0" stroke="#d96a73" stroke-width=".9"/>
</svg>
<div class="t" style="left:85.80px;top:381.97px;font-size:10.9px;line-height:14px;font-weight:400;color:#262626;letter-spacing:0.227px;-webkit-text-stroke:.18px #262626;">App/040422/001</div>
<div class="t" style="left:205.60px;top:381.97px;font-size:10.9px;line-height:14px;font-weight:400;color:#262626;letter-spacing:0.131px;-webkit-text-stroke:.18px #262626;">High</div>
<div class="t" style="left:328.60px;top:375.97px;font-size:10.9px;line-height:14px;font-weight:400;color:#262626;letter-spacing:0.102px;-webkit-text-stroke:.18px #262626;">Application</div>
<div class="t" style="left:328.60px;top:387.97px;font-size:10.9px;line-height:14px;font-weight:400;color:#262626;letter-spacing:0.003px;-webkit-text-stroke:.18px #262626;">Development</div>
<svg style="left:0;top:0" width="1" height="1"><rect x="453.6" y="376.80" width="76" height="25.2" rx="12.65" fill="#e0fbfe"/></svg>
<div class="t" style="left:468.30px;top:381.97px;font-size:10.9px;line-height:14px;font-weight:400;color:#2a2a2a;letter-spacing:0.141px;-webkit-text-stroke:.18px #262626;">In-progress</div>
<div class="t" style="left:570.50px;top:381.97px;font-size:10.9px;line-height:14px;font-weight:400;color:#262626;letter-spacing:-0.656px;-webkit-text-stroke:.18px #262626;">70%</div>
<div class="t" style="left:697.30px;top:375.97px;font-size:10.9px;line-height:14px;font-weight:400;color:#262626;letter-spacing:-0.149px;-webkit-text-stroke:.18px #262626;">Business Enhancement</div>
<div class="t" style="left:697.30px;top:387.97px;font-size:10.9px;line-height:14px;font-weight:400;color:#262626;letter-spacing:0.122px;-webkit-text-stroke:.18px #262626;">Department</div>
<svg style="left:842.6px;top:377.4px" width="24" height="24" viewBox="0 0 24 24"><defs><clipPath id="c8546_3894"><circle cx="12" cy="12" r="11.8"/></clipPath><filter id="fc8546_3894" x="-10%" y="-10%" width="120%" height="120%"><feGaussianBlur stdDeviation=".45"/></filter></defs><g clip-path="url(#c8546_3894)"><g filter="url(#fc8546_3894)"><rect x="-2" y="-2" width="28" height="28" fill="#f0f1f2"/><path d="M-.5 7.500C3 5.500 6.500 6.500 7.500 10L6.500 20.500C3 18.500 .5 14-.500 7.500Z" fill="#cbd2d3"/><path d="M3.200 25C3.800 18.500 7 15.800 10 15.200L14.800 15.200C18 15.800 21.200 18.500 21.800 25Z" fill="#dfe1e4"/><path d="M10.400 15.600L14.400 15.600L15 25L10.600 25Z" fill="#1c1c1e"/><path d="M10.400 15.600L8.800 21M14.400 15.600L16.200 21" stroke="#c5c8cc" stroke-width=".8"/><ellipse cx="12.300" cy="9.700" rx="3.600" ry="5.100" fill="#9c6c52"/><path d="M8.400 8.600C7.700 4 9.800 1.800 12.400 1.800C15.200 1.800 17.200 4 16.300 8.600C15.600 6 14.500 5.100 12.400 5.100C10.300 5.100 9.200 6 8.400 8.600Z" fill="#2b1d17"/><path d="M10.300 9.300h1.400M13.200 9.300h1.400" stroke="#4a2e22" stroke-width=".8"/><path d="M11 12.600c.8.700 1.900.7 2.700 0" stroke="#e8d8cf" stroke-width=".8" fill="none"/></g></g></svg>
<div class="t" style="left:871.20px;top:381.97px;font-size:10.9px;line-height:14px;font-weight:400;color:#262626;letter-spacing:0.062px;-webkit-text-stroke:.18px #262626;">Dafetta</div>
<div class="t" style="left:992.20px;top:381.97px;font-size:10.9px;line-height:14px;font-weight:400;color:#262626;letter-spacing:-0.108px;-webkit-text-stroke:.18px #262626;">Feb 24, 2022</div>
<svg style="left:1131px;top:379.7px" width="18" height="20" viewBox="0 0 18 20">
<rect x="2.1" y="1.5" width="12.400" height="12.300" fill="none" stroke="#d96a73" stroke-width=".95"/>
<path d="M6.600 12.700l.9-2.400 6-6a1.050 1.050 0 0 1 1.500 1.500l-6 6z" fill="#f8eef0" stroke="#d96a73" stroke-width=".9" stroke-linejoin="round"/>
<rect x="2.100" y="15.700" width="12.400" height="2.500" fill="#fbdde0" stroke="#d96a73" stroke-width=".9"/>
</svg>
<div class="t" style="left:85.80px;top:430.07px;font-size:10.9px;line-height:14px;font-weight:400;color:#262626;letter-spacing:0.113px;-webkit-text-stroke:.18px #262626;">DCI/040422/001</div>
<div class="t" style="left:208.30px;top:430.07px;font-size:10.9px;line-height:14px;font-weight:400;color:#262626;letter-spacing:0.108px;-webkit-text-stroke:.18px #262626;">Low</div>
<div class="t" style="left:328.60px;top:424.07px;font-size:10.9px;line-height:14px;font-weight:400;color:#262626;letter-spacing:0.102px;-webkit-text-stroke:.18px #262626;">Application</div>
<div class="t" style="left:328.60px;top:436.07px;font-size:10.9px;line-height:14px;font-weight:400;color:#262626;letter-spacing:0.003px;-webkit-text-stroke:.18px #262626;">Development</div>
<svg style="left:0;top:0" width="1" height="1"><rect x="454" y="424.90" width="66.8" height="25.2" rx="12.65" fill="#fab7c5"/></svg>
<div class="t" style="left:469.20px;top:430.07px;font-size:10.9px;line-height:14px;font-weight:400;color:#2a2a2a;letter-spacing:0.131px;-webkit-text-stroke:.18px #262626;">Logged</div>
<div class="t" style="left:572.60px;top:430.07px;font-size:10.9px;line-height:14px;font-weight:400;color:#262626;letter-spacing:-0.950px;-webkit-text-stroke:.18px #262626;">0%</div>
<div class="t" style="left:697.30px;top:424.07px;font-size:10.9px;line-height:14px;font-weight:400;color:#262626;letter-spacing:-0.149px;-webkit-text-stroke:.18px #262626;">Business Enhancement</div>
<div class="t" style="left:697.30px;top:436.07px;font-size:10.9px;line-height:14px;font-weight:400;color:#262626;letter-spacing:0.122px;-webkit-text-stroke:.18px #262626;">Department</div>
<svg style="left:841.0px;top:425.5px" width="24" height="24" viewBox="0 0 24 24"><defs><clipPath id="c8530_4375"><circle cx="12" cy="12" r="11.0"/></clipPath><filter id="fc8530_4375" x="-10%" y="-10%" width="120%" height="120%"><feGaussianBlur stdDeviation=".45"/></filter></defs><g clip-path="url(#c8530_4375)"><g filter="url(#fc8530_4375)"><rect x="-2" y="-2" width="28" height="28" fill="#f5bc44"/><path d="M4.200 25C4.800 20.600 8 19.300 10.200 19.400L15.200 19C18.200 19.300 20.200 21.200 20.500 25Z" fill="#3f7f60"/><path d="M10.200 15.500h4.200l.4 4.300c-1.400 1.200-3.600 1.200-5 0z" fill="#c97d52"/><ellipse cx="12.700" cy="12.500" rx="3.500" ry="4.700" fill="#d88c5b"/><path d="M7.600 11C6.600 7.500 7.400 5 10 4.300C12.500 3.600 15.300 4.600 15.500 7.200C15.600 8.400 15.400 9.200 15.200 9.800C14.600 8.600 13.600 8 12.400 8.200C10.600 8.500 9.500 9.500 9.300 12Z" fill="#3a2015"/><path d="M10.700 11.600h1.300M13.700 11.600h1.300" stroke="#6b3a22" stroke-width=".8"/><ellipse cx="11.500" cy="18.300" rx="1.900" ry="2.400" fill="#e6b08d"/><path d="M9.800 21.500c.8 1.300 2.600 1.500 3.600.4" stroke="#1f3d30" stroke-width="1.200" fill="none"/></g></g></svg>
<div class="t" style="left:870.50px;top:430.07px;font-size:10.9px;line-height:14px;font-weight:400;color:#262626;letter-spacing:-0.323px;-webkit-text-stroke:.18px #262626;">Toba G.</div>
<div class="t" style="left:993.70px;top:430.07px;font-size:10.9px;line-height:14px;font-weight:400;color:#262626;letter-spacing:-0.244px;-webkit-text-stroke:.18px #262626;">Feb 15, 2022</div>
<svg style="left:1131px;top:427.8px" width="18" height="20" viewBox="0 0 18 20">
<rect x="2.1" y="1.5" width="12.400" height="12.300" fill="none" stroke="#d96a73" stroke-width=".95"/>
<path d="M6.600 12.700l.9-2.400 6-6a1.050 1.050 0 0 1 1.500 1.500l-6 6z" fill="#f8eef0" stroke="#d96a73" stroke-width=".9" stroke-linejoin="round"/>
<rect x="2.100" y="15.700" width="12.400" height="2.500" fill="#fbdde0" stroke="#d96a73" stroke-width=".9"/>
</svg>
<div class="t" style="left:85.80px;top:478.17px;font-size:10.9px;line-height:14px;font-weight:400;color:#262626;letter-spacing:0.227px;-webkit-text-stroke:.18px #262626;">App/040422/001</div>
<div class="t" style="left:205.60px;top:478.17px;font-size:10.9px;line-height:14px;font-weight:400;color:#262626;letter-spacing:0.131px;-webkit-text-stroke:.18px #262626;">High</div>
<div class="t" style="left:328.60px;top:472.17px;font-size:10.9px;line-height:14px;font-weight:400;color:#262626;letter-spacing:0.102px;-webkit-text-stroke:.18px #262626;">Application</div>
<div class="t" style="left:328.60px;top:484.17px;font-size:10.9px;line-height:14px;font-weight:400;color:#262626;letter-spacing:0.003px;-webkit-text-stroke:.18px #262626;">Development</div>
<svg style="left:0;top:0" width="1" height="1"><rect x="453.8" y="472.80" width="65.6" height="25.3" rx="12.65" fill="#fbf9d3"/></svg>
<div class="t" style="left:460.10px;top:478.37px;font-size:10.9px;line-height:14px;font-weight:400;color:#2a2a2a;letter-spacing:0.079px;-webkit-text-stroke:.18px #262626;">Completed</div>
<div class="t" style="left:567.80px;top:478.17px;font-size:10.9px;line-height:14px;font-weight:400;color:#262626;letter-spacing:-0.453px;-webkit-text-stroke:.18px #262626;">100%</div>
<div class="t" style="left:699.50px;top:472.17px;font-size:10.9px;line-height:14px;font-weight:400;color:#262626;letter-spacing:0.123px;-webkit-text-stroke:.18px #262626;">Administrative</div>
<div class="t" style="left:699.50px;top:484.17px;font-size:10.9px;line-height:14px;font-weight:400;color:#262626;letter-spacing:0.122px;-webkit-text-stroke:.18px #262626;">Department</div>
<svg style="left:843.7px;top:473.6px" width="24" height="24" viewBox="0 0 24 24"><defs><clipPath id="c8557_4856"><circle cx="12" cy="12" r="11.7"/></clipPath><filter id="fc8557_4856" x="-10%" y="-10%" width="120%" height="120%"><feGaussianBlur stdDeviation=".45"/></filter></defs><g clip-path="url(#c8557_4856)"><g filter="url(#fc8557_4856)"><rect x="-2" y="-2" width="28" height="28" fill="#dca983"/><path d="M2.500 25C3.500 19.800 8 18.700 12 18.800C16 18.700 20.500 19.800 21.500 25Z" fill="#dedee4"/><path d="M8.800 14.500h4.600l.6 5c-1.600 1.200-4.200 1.200-5.800 0z" fill="#7b4e32"/><ellipse cx="10.900" cy="11.300" rx="4.300" ry="5.500" fill="#8a5a3b"/><path d="M6.200 8C6.600 3.800 9.600 1.900 13 2.300C16.200 2.700 17.800 5 17.500 7.400C14.200 6.300 10 6.600 6.200 8Z" fill="#c6925f"/><path d="M6.400 11C5.600 7.500 6.800 4.600 9.200 3.300C7.800 5.500 7.500 7.800 7.700 11Z" fill="#5f3b26"/><path d="M9.500 10h1.500M12.500 10h1.500" stroke="#3e2618" stroke-width=".8"/><path d="M10.500 14c.8.500 1.800.5 2.600 0" stroke="#e9d3c4" stroke-width=".8" fill="none"/></g></g></svg>
<div class="t" style="left:872.60px;top:478.17px;font-size:10.9px;line-height:14px;font-weight:400;color:#262626;letter-spacing:-0.018px;-webkit-text-stroke:.18px #262626;">Gabriel</div>
<div class="t" style="left:993.70px;top:478.17px;font-size:10.9px;line-height:14px;font-weight:400;color:#262626;letter-spacing:-0.244px;-webkit-text-stroke:.18px #262626;">Feb 15, 2022</div>
<svg style="left:1131px;top:475.9px" width="18" height="20" viewBox="0 0 18 20">
<rect x="2.1" y="1.5" width="12.400" height="12.300" fill="none" stroke="#d96a73" stroke-width=".95"/>
<path d="M6.600 12.700l.9-2.400 6-6a1.050 1.050 0 0 1 1.500 1.500l-6 6z" fill="#f8eef0" stroke="#d96a73" stroke-width=".9" stroke-linejoin="round"/>
<rect x="2.100" y="15.700" width="12.400" height="2.500" fill="#fbdde0" stroke="#d96a73" stroke-width=".9"/>
</svg>
<div class="t" style="left:85.80px;top:526.27px;font-size:10.9px;line-height:14px;font-weight:400;color:#262626;letter-spacing:0.072px;-webkit-text-stroke:.18px #262626;">SAP/040422/001</div>
<div class="t" style="left:205.60px;top:526.27px;font-size:10.9px;line-height:14px;font-weight:400;color:#262626;letter-spacing:0.131px;-webkit-text-stroke:.18px #262626;">High</div>
<div class="t" style="left:328.60px;top:520.27px;font-size:10.9px;line-height:14px;font-weight:400;color:#262626;letter-spacing:0.102px;-webkit-text-stroke:.18px #262626;">Application</div>
<div class="t" style="left:328.60px;top:532.27px;font-size:10.9px;line-height:14px;font-weight:400;color:#262626;letter-spacing:0.003px;-webkit-text-stroke:.18px #262626;">Development</div>
<svg style="left:0;top:0" width="1" height="1"><rect x="454" y="521.10" width="66.8" height="25.2" rx="12.65" fill="#fab7c5"/></svg>
<div class="t" style="left:469.20px;top:526.27px;font-size:10.9px;line-height:14px;font-weight:400;color:#2a2a2a;letter-spacing:0.131px;-webkit-text-stroke:.18px #262626;">Logged</div>
<div class="t" style="left:572.60px;top:526.27px;font-size:10.9px;line-height:14px;font-weight:400;color:#262626;letter-spacing:-0.950px;-webkit-text-stroke:.18px #262626;">0%</div>
<div class="t" style="left:697.30px;top:520.27px;font-size:10.9px;line-height:14px;font-weight:400;color:#262626;letter-spacing:-0.149px;-webkit-text-stroke:.18px #262626;">Business Enhancement</div>
<div class="t" style="left:697.30px;top:532.27px;font-size:10.9px;line-height:14px;font-weight:400;color:#262626;letter-spacing:0.122px;-webkit-text-stroke:.18px #262626;">Department</div>
<svg style="left:841.0px;top:521.7px" width="24" height="24" viewBox="0 0 24 24"><defs><clipPath id="c8530_5337"><circle cx="12" cy="12" r="11.0"/></clipPath><filter id="fc8530_5337" x="-10%" y="-10%" width="120%" height="120%"><feGaussianBlur stdDeviation=".45"/></filter></defs><g clip-path="url(#c8530_5337)"><g filter="url(#fc8530_5337)"><rect x="-2" y="-2" width="28" height="28" fill="#f5bc44"/><path d="M4.200 25C4.800 20.600 8 19.300 10.200 19.400L15.200 19C18.200 19.300 20.200 21.200 20.500 25Z" fill="#3f7f60"/><path d="M10.200 15.500h4.200l.4 4.300c-1.400 1.200-3.600 1.200-5 0z" fill="#c97d52"/><ellipse cx="12.700" cy="12.500" rx="3.500" ry="4.700" fill="#d88c5b"/><path d="M7.600 11C6.600 7.500 7.400 5 10 4.300C12.500 3.600 15.300 4.600 15.500 7.200C15.600 8.400 15.400 9.200 15.200 9.800C14.600 8.600 13.600 8 12.400 8.200C10.600 8.500 9.500 9.500 9.300 12Z" fill="#3a2015"/><path d="M10.700 11.600h1.300M13.700 11.600h1.300" stroke="#6b3a22" stroke-width=".8"/><ellipse cx="11.500" cy="18.300" rx="1.900" ry="2.400" fill="#e6b08d"/><path d="M9.800 21.500c.8 1.300 2.600 1.500 3.600.4" stroke="#1f3d30" stroke-width="1.200" fill="none"/></g></g></svg>
<div class="t" style="left:870.50px;top:526.27px;font-size:10.9px;line-height:14px;font-weight:400;color:#262626;letter-spacing:-0.323px;-webkit-text-stroke:.18px #262626;">Toba G.</div>
<div class="t" style="left:993.20px;top:526.27px;font-size:10.9px;line-height:14px;font-weight:400;color:#262626;letter-spacing:-0.199px;-webkit-text-stroke:.18px #262626;">Feb 14, 2022</div>
<svg style="left:1131px;top:524.0px" width="18" height="20" viewBox="0 0 18 20">
<rect x="2.1" y="1.5" width="12.400" height="12.300" fill="none" stroke="#d96a73" stroke-width=".95"/>
<path d="M6.600 12.700l.9-2.400 6-6a1.050 1.050 0 0 1 1.500 1.500l-6 6z" fill="#f8eef0" stroke="#d96a73" stroke-width=".9" stroke-linejoin="round"/>
<rect x="2.100" y="15.700" width="12.400" height="2.500" fill="#fbdde0" stroke="#d96a73" stroke-width=".9"/>
</svg>
<div class="t" style="left:85.80px;top:574.37px;font-size:10.9px;line-height:14px;font-weight:400;color:#262626;letter-spacing:0.227px;-webkit-text-stroke:.18px #262626;">App/040422/001</div>
<div class="t" style="left:205.60px;top:574.37px;font-size:10.9px;line-height:14px;font-weight:400;color:#262626;letter-spacing:0.131px;-webkit-text-stroke:.18px #262626;">High</div>
<div class="t" style="left:328.60px;top:568.37px;font-size:10.9px;line-height:14px;font-weight:400;color:#262626;letter-spacing:0.102px;-webkit-text-stroke:.18px #262626;">Application</div>
<div class="t" style="left:328.60px;top:580.37px;font-size:10.9px;line-height:14px;font-weight:400;color:#262626;letter-spacing:0.003px;-webkit-text-stroke:.18px #262626;">Development</div>
<svg style="left:0;top:0" width="1" height="1"><rect x="454" y="569.20" width="66.8" height="25.2" rx="12.65" fill="#fab7c5"/></svg>
<div class="t" style="left:469.20px;top:574.37px;font-size:10.9px;line-height:14px;font-weight:400;color:#2a2a2a;letter-spacing:0.131px;-webkit-text-stroke:.18px #262626;">Logged</div>
<div class="t" style="left:572.60px;top:574.37px;font-size:10.9px;line-height:14px;font-weight:400;color:#262626;letter-spacing:-0.950px;-webkit-text-stroke:.18px #262626;">0%</div>
<div class="t" style="left:697.30px;top:568.37px;font-size:10.9px;line-height:14px;font-weight:400;color:#262626;letter-spacing:-0.149px;-webkit-text-stroke:.18px #262626;">Business Enhancement</div>
<div class="t" style="left:697.30px;top:580.37px;font-size:10.9px;line-height:14px;font-weight:400;color:#262626;letter-spacing:0.122px;-webkit-text-stroke:.18px #262626;">Department</div>
<svg style="left:841.0px;top:569.8px" width="24" height="24" viewBox="0 0 24 24"><defs><clipPath id="c8530_5818"><circle cx="12" cy="12" r="11.0"/></clipPath><filter id="fc8530_5818" x="-10%" y="-10%" width="120%" height="120%"><feGaussianBlur stdDeviation=".45"/></filter></defs><g clip-path="url(#c8530_5818)"><g filter="url(#fc8530_5818)"><rect x="-2" y="-2" width="28" height="28" fill="#f5bc44"/><path d="M4.200 25C4.800 20.600 8 19.300 10.200 19.400L15.200 19C18.200 19.300 20.200 21.200 20.500 25Z" fill="#3f7f60"/><path d="M10.200 15.500h4.200l.4 4.300c-1.400 1.200-3.600 1.200-5 0z" fill="#c97d52"/><ellipse cx="12.700" cy="12.500" rx="3.500" ry="4.700" fill="#d88c5b"/><path d="M7.600 11C6.600 7.500 7.400 5 10 4.300C12.500 3.600 15.300 4.600 15.500 7.200C15.600 8.400 15.400 9.200 15.200 9.800C14.600 8.600 13.600 8 12.400 8.200C10.600 8.500 9.500 9.500 9.300 12Z" fill="#3a2015"/><path d="M10.700 11.600h1.300M13.700 11.600h1.300" stroke="#6b3a22" stroke-width=".8"/><ellipse cx="11.500" cy="18.300" rx="1.900" ry="2.400" fill="#e6b08d"/><path d="M9.800 21.500c.8 1.300 2.600 1.500 3.600.4" stroke="#1f3d30" stroke-width="1.200" fill="none"/></g></g></svg>
<div class="t" style="left:870.50px;top:574.37px;font-size:10.9px;line-height:14px;font-weight:400;color:#262626;letter-spacing:-0.323px;-webkit-text-stroke:.18px #262626;">Toba G.</div>
<div class="t" style="left:993.20px;top:574.37px;font-size:10.9px;line-height:14px;font-weight:400;color:#262626;letter-spacing:-0.199px;-webkit-text-stroke:.18px #262626;">Feb 13, 2022</div>
<svg style="left:1131px;top:572.1px" width="18" height="20" viewBox="0 0 18 20">
<rect x="2.1" y="1.5" width="12.400" height="12.300" fill="none" stroke="#d96a73" stroke-width=".95"/>
<path d="M6.600 12.700l.9-2.400 6-6a1.050 1.050 0 0 1 1.500 1.500l-6 6z" fill="#f8eef0" stroke="#d96a73" stroke-width=".9" stroke-linejoin="round"/>
<rect x="2.100" y="15.700" width="12.400" height="2.500" fill="#fbdde0" stroke="#d96a73" stroke-width=".9"/>
</svg>
<div class="t" style="left:85.80px;top:622.47px;font-size:10.9px;line-height:14px;font-weight:400;color:#262626;letter-spacing:0.081px;-webkit-text-stroke:.18px #262626;">AST/040422/001</div>
<div class="t" style="left:205.60px;top:622.47px;font-size:10.9px;line-height:14px;font-weight:400;color:#262626;letter-spacing:0.131px;-webkit-text-stroke:.18px #262626;">High</div>
<div class="t" style="left:328.60px;top:616.47px;font-size:10.9px;line-height:14px;font-weight:400;color:#262626;letter-spacing:0.102px;-webkit-text-stroke:.18px #262626;">Application</div>
<div class="t" style="left:328.60px;top:628.47px;font-size:10.9px;line-height:14px;font-weight:400;color:#262626;letter-spacing:0.003px;-webkit-text-stroke:.18px #262626;">Development</div>
<svg style="left:0;top:0" width="1" height="1"><rect x="454" y="617.30" width="66.8" height="25.2" rx="12.65" fill="#fab7c5"/></svg>
<div class="t" style="left:469.20px;top:622.47px;font-size:10.9px;line-height:14px;font-weight:400;color:#2a2a2a;letter-spacing:0.131px;-webkit-text-stroke:.18px #262626;">Logged</div>
<div class="t" style="left:572.60px;top:622.47px;font-size:10.9px;line-height:14px;font-weight:400;color:#262626;letter-spacing:-0.950px;-webkit-text-stroke:.18px #262626;">0%</div>
<div class="t" style="left:697.30px;top:616.47px;font-size:10.9px;line-height:14px;font-weight:400;color:#262626;letter-spacing:-0.149px;-webkit-text-stroke:.18px #262626;">Business Enhancement</div>
<div class="t" style="left:697.30px;top:628.47px;font-size:10.9px;line-height:14px;font-weight:400;color:#262626;letter-spacing:0.122px;-webkit-text-stroke:.18px #262626;">Department</div>
<svg style="left:842.5px;top:617.9px" width="24" height="24" viewBox="0 0 24 24"><defs><clipPath id="c8545_6299"><circle cx="12" cy="12" r="11.8"/></clipPath><filter id="fc8545_6299" x="-10%" y="-10%" width="120%" height="120%"><feGaussianBlur stdDeviation=".45"/></filter></defs><g clip-path="url(#c8545_6299)"><g filter="url(#fc8545_6299)"><defs><linearGradient id="gc8545_6299" x1="0" x2="1" y1="0" y2="0"><stop offset="0" stop-color="#d3dcd5"/><stop offset=".45" stop-color="#c3d0c6"/><stop offset="1" stop-color="#a3b8a8"/></linearGradient></defs><rect x="-2" y="-2" width="28" height="28" fill="url(#gc8545_6299)"/><path d="M2.200 25C2.800 18.500 7 15.800 11 15.200L15.200 14.600C19.200 15.600 22.200 18.800 22.800 25Z" fill="#eef0f6"/><ellipse cx="12.300" cy="9.100" rx="4.500" ry="6.100" fill="#b87446"/><path d="M7.700 7.400C7.200 3.500 9.400 1.200 12.300 1.200C15.300 1.200 17.400 3.500 16.900 7.400C16.200 5 14.900 4.100 12.300 4.100C9.700 4.100 8.500 5 7.700 7.400Z" fill="#3a2414"/><path d="M9.800 8.700h1.700M13.400 8.700h1.700" stroke="#5b3018" stroke-width=".8"/><path d="M10.600 12.300c1 .8 2.500.8 3.500 0" stroke="#f2ddd0" stroke-width=".8" fill="none"/><path d="M10.100 16.300L11.900 16.700L9.700 23.600L8 23.100Z" fill="#5f7896"/></g></g></svg>
<div class="t" style="left:871.60px;top:622.47px;font-size:10.9px;line-height:14px;font-weight:400;color:#262626;letter-spacing:-0.240px;-webkit-text-stroke:.18px #262626;">John B.</div>
<div class="t" style="left:993.00px;top:622.47px;font-size:10.9px;line-height:14px;font-weight:400;color:#262626;letter-spacing:-0.181px;-webkit-text-stroke:.18px #262626;">Feb 10, 2022</div>
<svg style="left:1131px;top:620.2px" width="18" height="20" viewBox="0 0 18 20">
<rect x="2.1" y="1.5" width="12.400" height="12.300" fill="none" stroke="#d96a73" stroke-width=".95"/>
<path d="M6.600 12.700l.9-2.400 6-6a1.050 1.050 0 0 1 1.500 1.500l-6 6z" fill="#f8eef0" stroke="#d96a73" stroke-width=".9" stroke-linejoin="round"/>
<rect x="2.100" y="15.700" width="12.400" height="2.500" fill="#fbdde0" stroke="#d96a73" stroke-width=".9"/>
</svg>
<div class="t" style="left:85.80px;top:670.57px;font-size:10.9px;line-height:14px;font-weight:400;color:#262626;letter-spacing:0.227px;-webkit-text-stroke:.18px #262626;">App/040422/001</div>
<div class="t" style="left:205.60px;top:670.57px;font-size:10.9px;line-height:14px;font-weight:400;color:#262626;letter-spacing:0.131px;-webkit-text-stroke:.18px #262626;">High</div>
<div class="t" style="left:328.60px;top:664.57px;font-size:10.9px;line-height:14px;font-weight:400;color:#262626;letter-spacing:0.102px;-webkit-text-stroke:.18px #262626;">Application</div>
<div class="t" style="left:328.60px;top:676.57px;font-size:10.9px;line-height:14px;font-weight:400;color:#262626;letter-spacing:0.003px;-webkit-text-stroke:.18px #262626;">Development</div>
<svg style="left:0;top:0" width="1" height="1"><rect x="454" y="665.40" width="66.8" height="25.2" rx="12.65" fill="#fab7c5"/></svg>
<div class="t" style="left:469.20px;top:670.57px;font-size:10.9px;line-height:14px;font-weight:400;color:#2a2a2a;letter-spacing:0.131px;-webkit-text-stroke:.18px #262626;">Logged</div>
<div class="t" style="left:572.60px;top:670.57px;font-size:10.9px;line-height:14px;font-weight:400;color:#262626;letter-spacing:-0.950px;-webkit-text-stroke:.18px #262626;">0%</div>
<div class="t" style="left:697.30px;top:664.57px;font-size:10.9px;line-height:14px;font-weight:400;color:#262626;letter-spacing:-0.149px;-webkit-text-stroke:.18px #262626;">Business Enhancement</div>
<div class="t" style="left:697.30px;top:676.57px;font-size:10.9px;line-height:14px;font-weight:400;color:#262626;letter-spacing:0.122px;-webkit-text-stroke:.18px #262626;">Department</div>
<svg style="left:841.0px;top:666.0px" width="24" height="24" viewBox="0 0 24 24"><defs><clipPath id="c8530_6780"><circle cx="12" cy="12" r="11.0"/></clipPath><filter id="fc8530_6780" x="-10%" y="-10%" width="120%" height="120%"><feGaussianBlur stdDeviation=".45"/></filter></defs><g clip-path="url(#c8530_6780)"><g filter="url(#fc8530_6780)"><rect x="-2" y="-2" width="28" height="28" fill="#f5bc44"/><path d="M4.200 25C4.800 20.600 8 19.300 10.200 19.400L15.200 19C18.200 19.300 20.200 21.200 20.500 25Z" fill="#3f7f60"/><path d="M10.200 15.500h4.200l.4 4.300c-1.400 1.200-3.600 1.200-5 0z" fill="#c97d52"/><ellipse cx="12.700" cy="12.500" rx="3.500" ry="4.700" fill="#d88c5b"/><path d="M7.600 11C6.600 7.500 7.400 5 10 4.300C12.500 3.600 15.300 4.600 15.500 7.200C15.600 8.400 15.400 9.200 15.200 9.800C14.600 8.600 13.600 8 12.400 8.200C10.600 8.500 9.500 9.500 9.300 12Z" fill="#3a2015"/><path d="M10.700 11.600h1.300M13.700 11.600h1.300" stroke="#6b3a22" stroke-width=".8"/><ellipse cx="11.500" cy="18.300" rx="1.900" ry="2.400" fill="#e6b08d"/><path d="M9.800 21.500c.8 1.300 2.600 1.500 3.600.4" stroke="#1f3d30" stroke-width="1.200" fill="none"/></g></g></svg>
<div class="t" style="left:870.50px;top:670.57px;font-size:10.9px;line-height:14px;font-weight:400;color:#262626;letter-spacing:-0.323px;-webkit-text-stroke:.18px #262626;">Toba G.</div>
<div class="t" style="left:994.20px;top:670.57px;font-size:10.9px;line-height:14px;font-weight:400;color:#262626;letter-spacing:-0.180px;-webkit-text-stroke:.18px #262626;">Jan 15, 2022</div>
<svg style="left:1131px;top:668.3px" width="18" height="20" viewBox="0 0 18 20">
<rect x="2.1" y="1.5" width="12.400" height="12.300" fill="none" stroke="#d96a73" stroke-width=".95"/>
<path d="M6.600 12.700l.9-2.400 6-6a1.050 1.050 0 0 1 1.500 1.500l-6 6z" fill="#f8eef0" stroke="#d96a73" stroke-width=".9" stroke-linejoin="round"/>
<rect x="2.100" y="15.700" width="12.400" height="2.500" fill="#fbdde0" stroke="#d96a73" stroke-width=".9"/>
</svg>
<div class="abs" style="left:1197.5px;top:76px;width:2.5px;height:146px;background:#e6eeee"></div>
</body></html>
